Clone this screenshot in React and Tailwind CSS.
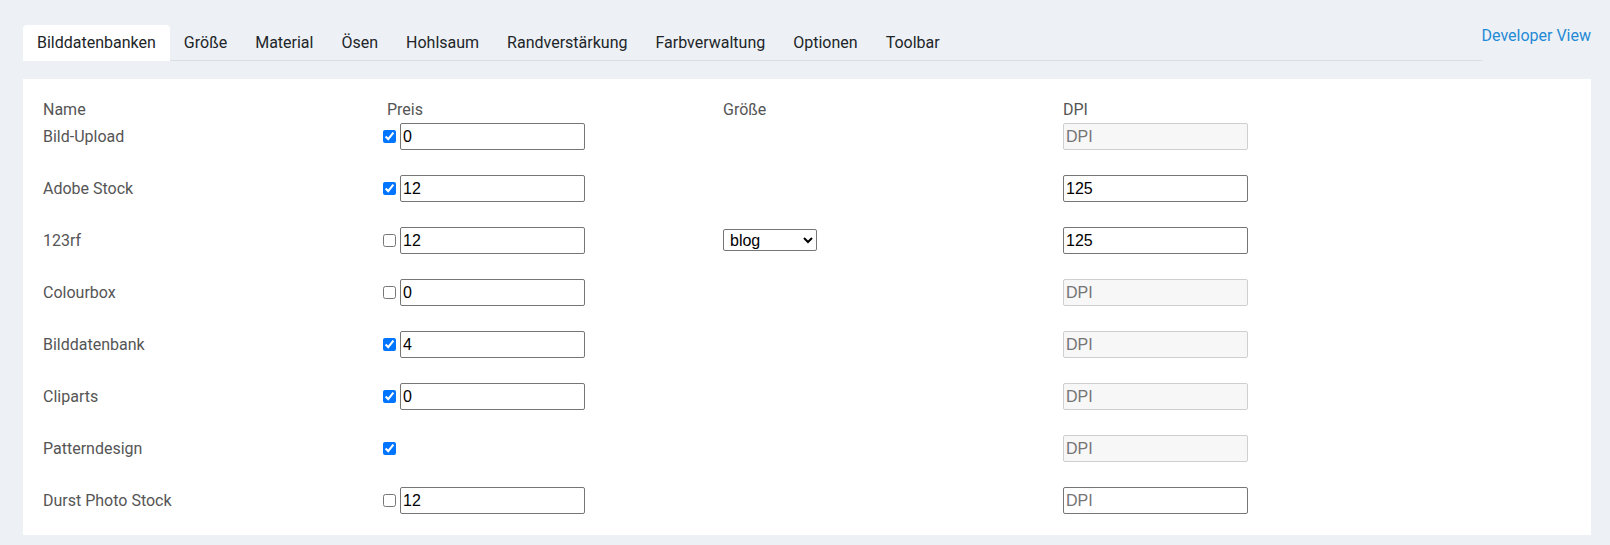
import { useState } from 'react'

const TABS = ['Bilddatenbanken', 'Größe', 'Material', 'Ösen', 'Hohlsaum', 'Randverstärkung', 'Farbverwaltung', 'Optionen', 'Toolbar']

const SOURCES = [
  { name: 'Bild-Upload', on: true, price: '0', dpi: null },
  { name: 'Adobe Stock', on: true, price: '12', dpi: '125' },
  { name: '123rf', on: false, price: '12', size: true, dpi: '125' },
  { name: 'Colourbox', on: false, price: '0', dpi: null },
  { name: 'Bilddatenbank', on: true, price: '4', dpi: null },
  { name: 'Cliparts', on: true, price: '0', dpi: null },
  { name: 'Patterndesign', on: true, price: null, dpi: null },
  { name: 'Durst Photo Stock', on: false, price: '12', dpi: '' },
]

const field = "w-[185px] h-[27px] rounded-[2px] border px-[2px] text-[16px] font-['Liberation_Sans',Arial,sans-serif] outline-none"

export default function App() {
  const [tab, setTab] = useState(0)

  return (
    <div className="min-h-screen bg-[#edf1f5] pl-[23px] pr-[19px] pt-[25px] font-['Roboto',sans-serif] text-[16px] leading-[22px]">
      <div className="flex">
        <div className="flex flex-1 h-[36px] border-b border-[#dadee2]">
          {TABS.map((t, i) => (
            <button
              key={t}
              onClick={() => setTab(i)}
              className={`-mb-px h-[36px] px-[14px] rounded-t-[4px] text-[#212529] ${tab === i ? 'bg-white' : ''}`}
            >
              {t}
            </button>
          ))}
        </div>
        <a href="#" className="text-[#1f8ad6]">Developer View</a>
      </div>

      <div className="mt-[18px] bg-white pl-[20px] pt-[20px] pb-[21px] text-[#555]">
        <div className="grid grid-cols-[340px_340px_340px_1fr] h-[22px] mb-[2px]">
          <div>Name</div>
          <div className="pl-[4px]">Preis</div>
          <div>Größe</div>
          <div>DPI</div>
        </div>

        <div className="flex flex-col gap-[25px]">
          {SOURCES.map(s => (
            <div key={s.name} className="grid grid-cols-[340px_340px_340px_1fr] h-[27px] items-center">
              <div>{s.name}</div>
              <div className="flex items-center gap-[4px]">
                <input type="checkbox" defaultChecked={s.on} className="m-0 w-[13px] h-[13px]" />
                {s.price !== null && (
                  <input type="text" defaultValue={s.price} className={`${field} border-[#767676] text-black`} />
                )}
              </div>
              <div>
                {s.size && (
                  <select defaultValue="blog" className="w-[94px] h-[22px] rounded-[2px] border border-[#767676] pl-[2px] text-[16px] text-black font-['Liberation_Sans',Arial,sans-serif]">
                    <option value="blog">blog</option>
                    <option value="web">web</option>
                    <option value="print">print</option>
                  </select>
                )}
              </div>
              <div>
                {s.dpi === null ? (
                  <input type="text" disabled placeholder="DPI" className={`${field} border-[#cfcfcf] bg-[#f7f7f7] placeholder:text-[#757575]`} />
                ) : (
                  <input type="text" defaultValue={s.dpi} placeholder="DPI" className={`${field} border-[#767676] text-black placeholder:text-[#757575]`} />
                )}
              </div>
            </div>
          ))}
        </div>
      </div>
    </div>
  )
}
